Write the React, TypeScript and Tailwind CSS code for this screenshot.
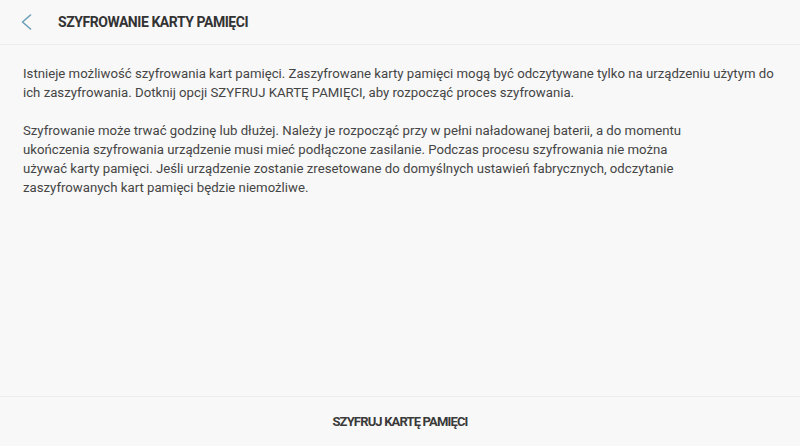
import { ReactNode } from 'react';

const font = { fontFamily: 'Roboto, "Noto Sans", sans-serif' };

function Line({ children }: { children: ReactNode }) {
  return <div className="whitespace-nowrap">{children}</div>;
}

export default function App() {
  return (
    <div className="w-[800px] h-[446px] bg-[#f8f8f8] flex flex-col text-[#3c3c3c]" style={font}>
      {/* Header */}
      <div className="h-[45px] flex items-center border-b border-[#ececec] shrink-0">
        <div className="w-[58px] flex items-center pl-[21px]">
          <svg width="11" height="16" viewBox="0 0 11 16" fill="none">
            <polyline points="9.5,1 1.5,8 9.5,15" stroke="#6a9fb8" strokeWidth="1.6" strokeLinecap="round" strokeLinejoin="round" />
          </svg>
        </div>
        <h1 className="text-[14px] font-bold tracking-[-0.45px] text-[#333]">SZYFROWANIE KARTY PAMIĘCI</h1>
      </div>

      {/* Body */}
      <div className="flex-1 px-[23px] pt-[19px] text-[13.2px] leading-[19px] text-[#454545]">
        <div className="mb-[19px]">
          <Line>Istnieje możliwość szyfrowania kart pamięci. Zaszyfrowane karty pamięci mogą być odczytywane tylko na urządzeniu użytym do</Line>
          <Line>ich zaszyfrowania. Dotknij opcji SZYFRUJ KARTĘ PAMIĘCI, aby rozpocząć proces szyfrowania.</Line>
        </div>
        <div>
          <Line>Szyfrowanie może trwać godzinę lub dłużej. Należy je rozpocząć przy w pełni naładowanej baterii, a do momentu</Line>
          <Line>ukończenia szyfrowania urządzenie musi mieć podłączone zasilanie. Podczas procesu szyfrowania nie można</Line>
          <Line>używać karty pamięci. Jeśli urządzenie zostanie zresetowane do domyślnych ustawień fabrycznych, odczytanie</Line>
          <Line>zaszyfrowanych kart pamięci będzie niemożliwe.</Line>
        </div>
      </div>

      {/* Footer button */}
      <div className="h-[50px] border-t border-[#ececec] flex items-center justify-center shrink-0">
        <span className="text-[13px] font-bold tracking-[-0.85px] text-[#3a3a3a]">SZYFRUJ KARTĘ PAMIĘCI</span>
      </div>
    </div>
  );
}
